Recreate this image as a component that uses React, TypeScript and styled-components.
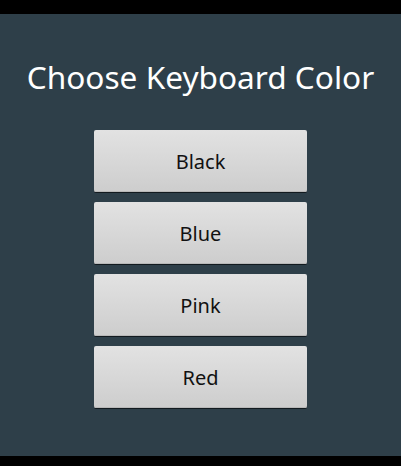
import React from 'react';
import styled, { createGlobalStyle } from 'styled-components';

const GlobalStyle = createGlobalStyle`
  html, body {
    margin: 0;
    padding: 0;
    background: #000;
  }
  body {
    font-family: "Noto Sans", "Open Sans", sans-serif;
  }
`;

const Screen = styled.div`
  width: 401px;
  height: 466px;
  display: flex;
  flex-direction: column;
  background: #000;
`;

const StatusBar = styled.div`
  height: 14px;
  flex: none;
  background: #000;
`;

const Content = styled.main`
  flex: 1;
  display: flex;
  flex-direction: column;
  align-items: center;
  background: #2e3f49;
`;

const Title = styled.h1`
  margin: 44px 0 0;
  font-size: 31.6px;
  font-weight: 400;
  line-height: 38px;
  color: #ffffff;
`;

const ButtonList = styled.div`
  display: flex;
  flex-direction: column;
  gap: 10px;
  margin-top: 34px;
`;

const ColorButton = styled.button`
  width: 213px;
  height: 62px;
  border: none;
  border-radius: 2px;
  background: linear-gradient(#e2e2e2, #cdcdcd);
  box-shadow: 0 1px 0 #121a1f, inset 0 -1px 0 #b8b8b8;
  font-family: "Noto Sans", "Open Sans", sans-serif;
  font-size: 20px;
  color: #111;
  cursor: pointer;
  padding: 0;
`;

const BottomBar = styled.div`
  height: 10px;
  flex: none;
  background: #000;
`;

const colors = ['Black', 'Blue', 'Pink', 'Red'];

const App: React.FC = () => {
  return (
    <>
      <GlobalStyle />
      <Screen>
        <StatusBar />
        <Content>
          <Title>Choose Keyboard Color</Title>
          <ButtonList>
            {colors.map((c) => (
              <ColorButton key={c}>{c}</ColorButton>
            ))}
          </ButtonList>
        </Content>
        <BottomBar />
      </Screen>
    </>
  );
};

export default App;
